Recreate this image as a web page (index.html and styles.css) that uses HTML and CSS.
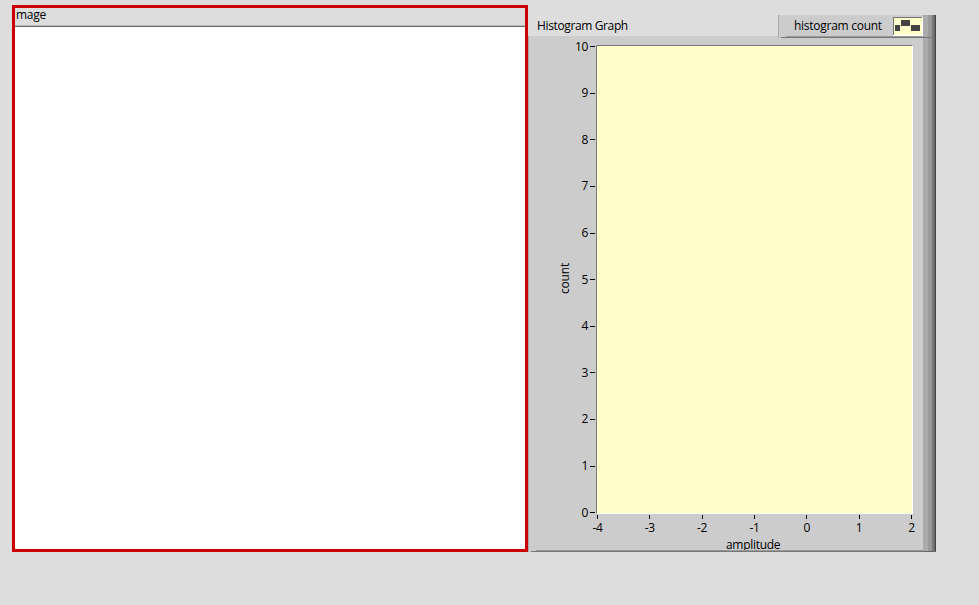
FILE: index.html
```html
<!DOCTYPE html>
<html lang="en">
<head>
<meta charset="utf-8">
<title>Histogram</title>
<link rel="stylesheet" href="styles.css">
</head>
<body>
<main class="front-panel">
  <section class="image-view">
    <header class="image-title"><span>mage</span></header>
    <div class="image-canvas"></div>
  </section>
  <section class="graph">
    <div class="graph-main">
      <header class="graph-header">
        <h1 class="graph-title"><span>Histogram Graph</span></h1>
        <div class="legend">
          <span class="legend-name">histogram count</span>
          <svg class="swatch" width="30" height="19" viewBox="0 0 30 19" shape-rendering="crispEdges">
            <path fill="#fff" d="M0 0h30v19H0z"/>
            <path fill="#777" d="M0 0h29v18H0z"/>
            <path fill="#ffc" d="M1 1h28v17H1z"/>
            <path fill="#444" d="M2 8h5v6H2zM8 3h9v6H8zM18 8h9v6h-9z"/>
          </svg>
        </div>
      </header>
      <div class="graph-body">
        <div class="y-name"><span>count</span></div>
        <ol class="y-axis">
          <li>10</li><li>9</li><li>8</li><li>7</li><li>6</li><li>5</li><li>4</li><li>3</li><li>2</li><li>1</li><li>0</li>
        </ol>
        <div class="plot"></div>
      </div>
      <ol class="x-axis">
        <li>-4</li><li>-3</li><li>-2</li><li>-1</li><li>0</li><li>1</li><li>2</li>
      </ol>
      <div class="x-name"><span>amplitude</span></div>
      <div class="bottom-edge"></div>
    </div>
    <div class="bevel"></div>
  </section>
</main>
</body>
</html>
```
FILE: styles.css
```css
* { box-sizing: border-box; }
body {
  margin: 0;
  height: 605px;
  overflow: hidden;
  background: #ddd;
  color: #000;
  font: 12px/16px "Open Sans", "Noto Sans", sans-serif;
}
ol, h1 { margin: 0; padding: 0; list-style: none; font: inherit; }
.front-panel { display: flex; padding: 5px 0 0 12px; }

.image-view {
  display: flex;
  flex-direction: column;
  width: 516px;
  height: 547px;
  border: 3px solid #c00;
}
.image-title {
  height: 19px;
  padding-left: 1px;
  line-height: 13px;
  border-bottom: 1px solid #666;
  box-shadow: inset 0 -1px #bbb;
}
.image-title span { letter-spacing: -0.25px; }
.image-canvas { flex: 1; background: #fff; }

.graph { display: flex; width: 408px; height: 537px; margin-top: 10px; }
.graph-main {
  display: flex;
  flex-direction: column;
  width: 395px;
  background: #ccc;
  border-left: 1px solid #aaa;
}
.graph-header { display: flex; height: 23px; margin-left: -1px; }
.graph-title {
  width: 250px;
  height: 21px;
  padding-left: 9px;
  line-height: 22px;
  background: #ddd;
}
.graph-title span { letter-spacing: -0.37px; }
.legend {
  display: flex;
  width: 145px;
  padding: 2px 0 0 15px;
  border-left: 1px solid #aaa;
  background:
    linear-gradient(#777, #777) 2px 22px / 200px 1px no-repeat,
    linear-gradient(#999, #999) 7px 21px / 200px 1px no-repeat,
    #ccc;
}
.legend-name { width: 99px; line-height: 18px; letter-spacing: -0.27px; white-space: nowrap; }

.graph-body { display: flex; height: 469px; margin-top: 7px; }
.y-name {
  display: flex;
  align-items: center;
  justify-content: center;
  width: 45px;
  height: 466px;
  padding-left: 27px;
}
.y-name span {
  writing-mode: vertical-rl;
  transform: rotate(180deg);
  letter-spacing: -0.2px;
}
.y-axis { width: 22px; margin-top: -21.6px; padding-right: 1px; }
.y-axis li {
  display: flex;
  align-items: center;
  justify-content: flex-end;
  height: 46.6px;
  letter-spacing: -0.4px;
}
.y-axis li::after { content: ""; width: 5px; height: 1px; margin-left: 2px; background: #000; }
.plot {
  width: 317px;
  border: solid;
  border-width: 1px;
  border-color: #777 #fff #fff #777;
  background: #ffc;
}
.x-axis { display: flex; height: 22px; margin: 1px -20px 0 42.3px; }
.x-axis li {
  display: flex;
  flex: 0 0 52.33px;
  flex-direction: column;
  align-items: center;
  line-height: 17px;
  letter-spacing: -0.3px;
}
.x-axis li::before { content: ""; width: 1px; height: 4px; background: #000; }
.x-name { height: 13px; padding-left: 197px; line-height: 15px; letter-spacing: -0.3px; }
.bottom-edge {
  height: 2px;
  background:
    linear-gradient(#999, #999) 7px 0 / 400px 1px no-repeat,
    linear-gradient(#777, #777) 2px 1px / 400px 1px no-repeat;
}
.bevel {
  width: 13px;
  border-bottom: 1px solid #666;
  background:
    linear-gradient(#777, #777) 0 22px / 12px 1px no-repeat,
    linear-gradient(90deg, #aaa 5px, #999 5px 9px, #777 9px 11px, #666 11px 12px, #444 12px);
}
```
